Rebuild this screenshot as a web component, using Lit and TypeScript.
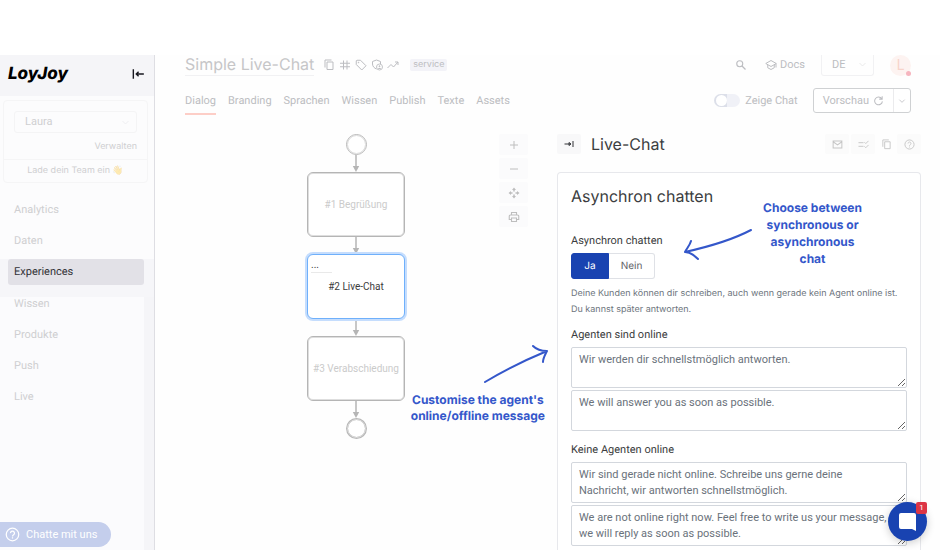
import { LitElement, html, css, svg } from "lit";
import { customElement, property, state } from "lit/decorators.js";
import { classMap } from "lit/directives/class-map.js";

const ICONS: Record<string, unknown> = {
  collapse: svg`<path d="M4 4v16M9 12h13M13 8l-4 4 4 4" stroke-width="2.4"/>`,
  expand: svg`<path d="M20 6v12M3 12h12M12 9l4 3-4 3z" stroke-width="2"/>`,
  copy: svg`<path d="M8 6h12v15H8zM4 17V2h13" stroke-width="2"/>`,
  hash: svg`<path d="M9 3v18M16 3v18M2 8.500h20M2 15.500h20" stroke-width="2"/>`,
  tag: svg`<path d="M2.500 3.500v7.500l11 11 8.500-8.500-11-11H4z" stroke-width="2"/><circle cx="7" cy="7" r="1" fill="currentColor"/>`,
  shield: svg`<path d="M11 20c-4-1.500-8-5-8-10V5l8-3 8 3v5" stroke-width="2"/><circle cx="17" cy="16" r="6" stroke-width="1.800"/><circle cx="17" cy="14.500" r="1.300" fill="currentColor"/><path d="M14.500 19h5" stroke-width="2"/>`,
  trend: svg`<path d="M1 18l7-7 5 5 9-10M16 6h6v6" stroke-width="2"/>`,
  search: svg`<circle cx="9.500" cy="9.500" r="6" stroke-width="2.200"/><path d="M14 14l7 7" stroke-width="2.600"/>`,
  cap: svg`<path d="M1.500 9L12 3l10.500 6L12 15zM5.500 12v5.500L12 21l6.500-3.500V12M22 9v8" stroke-width="2"/>`,
  reload: svg`<path d="M19 8a8.500 8.500 0 1 0 1.500 6M20 2.500V9h-6.500" stroke-width="2.200"/>`,
  down: svg`<path d="M4 8l8 8 8-8" stroke-width="2.400"/>`,
  plus: svg`<path d="M12 4v16M4 12h16" stroke-width="2"/>`,
  minus: svg`<path d="M4 12h16" stroke-width="2"/>`,
  move: svg`<path d="M12 1l4 5H8zM12 23l4-5H8zM1 12l5-4v8zM23 12l-5-4v8z" fill="currentColor" stroke="none"/><path d="M12 5v4M12 15v4M5 12h4M15 12h4" stroke-width="3"/>`,
  print: svg`<path d="M7 8V3h10v5M6 17H2.500v-6.500a2.500 2.500 0 0 1 2.500-2.500h14a2.500 2.500 0 0 1 2.500 2.500V17H18M7 14h10v7H7z" stroke-width="2.200"/>`,
  mail: svg`<path d="M2.500 4.500h19v15h-19zM2.500 6l9.500 7 9.500-7" stroke-width="2.200"/>`,
  rule: svg`<path d="M1 8h11M1 16h11M14 7l3 3 6-6M14 16l3 3 6-6" stroke-width="2"/>`,
  help: svg`<circle cx="12" cy="12" r="10" stroke-width="2"/><path d="M8.800 9.800a3.200 3.200 0 1 1 5 2.600c-1.200.8-1.800 1.300-1.800 2.600M12 16.500v2" stroke-width="2"/>`,
};

@customElement("ui-icon")
export class UiIcon extends LitElement {
  @property() name = "";
  static styles = css`
    :host { display: inline-flex; flex: none; width: 12px; height: 12px; }
    svg { width: 100%; height: 100%; fill: none; stroke: currentColor; }
  `;
  render() {
    return html`<svg viewBox="0 0 24 24" aria-hidden="true">${ICONS[this.name]}</svg>`;
  }
}

const NAV = ["Analytics", "Daten", "Experiences", "Wissen", "Produkte", "Push", "Live"];

@customElement("side-bar")
export class SideBar extends LitElement {
  static styles = css`
    :host { display: flex; flex-direction: column; flex: none; width: 155px; box-sizing: border-box;
      border-right: 1px solid #dedee3; background: #fcfcfd; color: #cfcfd1; }
    .top { display: flex; align-items: center; justify-content: space-between; height: 41px;
      padding: 0 9px 4px 8px; box-sizing: border-box; background: #f5f5f8; color: #000; }
    .logo { font: italic 800 17px/24px Inter, sans-serif; }
    button { font: inherit; color: inherit; border: 0; padding: 0; background: none; }
    .fold { display: flex; padding: 5px 0; color: #17171f; }
    .fold ui-icon { width: 14px; height: 14px; }
    .team { display: flex; flex-direction: column; margin: 4px 6px 0 3px; border: 1px solid #f5f5f6;
      border-radius: 4px; font: 9px/14px Inter, sans-serif; }
    .pick { position: relative; display: flex; margin: 10px 10px 0; }
    .pick select { appearance: none; flex: 1; min-width: 0; height: 22px; padding: 0 10px;
      border: 1px solid #f4f4f5; border-radius: 3px; background: none; font: 11px/16px Roboto, Inter, sans-serif; color: inherit; }
    .pick ui-icon { position: absolute; right: 7px; top: 7px; width: 9px; height: 9px; color: #ececee; }
    a { color: inherit; text-decoration: none; }
    .manage { align-self: flex-end; margin: 7px 10px 5px; }
    .invite { border-top: 1px solid #f5f5f6; padding: 4px 0; text-align: center; }
    .hand { opacity: 0.35; }
    nav { display: flex; flex-direction: column; flex: 1; margin-top: 14px; font-size: 11px; }
    nav a { display: flex; align-items: center; height: 26px; margin: 0 10px 5px 8px; padding: 0 6px; border-radius: 3px; }
    .band { background: #f6f6f9; height: 38px; }
    .band a { background: #e2e1e7; color: #333338; }
    .rest { flex: 1; background: #fbfbfd; border-right: 10px solid #f5f5f8; }
    .rest a { margin-right: 0; }
    .rest a:first-child { height: 14px; margin-bottom: 11px; }
  `;
  render() {
    return html`
      <div class="top">
        <span class="logo">LoyJoy</span>
        <button class="fold" aria-label="Menü einklappen"><ui-icon name="collapse"></ui-icon></button>
      </div>
      <div class="team">
        <div class="pick">
          <select aria-label="Team"><option>Laura</option></select>
          <ui-icon name="down"></ui-icon>
        </div>
        <a class="manage" href="#verwalten">Verwalten</a>
        <a class="invite" href="#einladen">Lade dein Team ein <span class="hand">👋</span></a>
      </div>
      <nav>
        ${NAV.slice(0, 2).map((n) => html`<a href="#${n}">${n}</a>`)}
        <div class="band"><a href="#Experiences" aria-current="page">${NAV[2]}</a></div>
        <div class="rest">${NAV.slice(3).map((n) => html`<a href="#${n}">${n}</a>`)}</div>
      </nav>`;
  }
}

@customElement("page-header")
export class PageHeader extends LitElement {
  static styles = css`
    :host { display: flex; flex-direction: column; padding: 0 20px 0 30px; color: #bcbdc1; }
    .row { display: flex; align-items: center; }
    .first { height: 20px; }
    h1 { margin: 0; padding-bottom: 2px; font: 400 16px/18px Inter, sans-serif; color: #c6c6c8; border-bottom: 1px solid #f1f1f3; }
    .tools { display: flex; gap: 4px; margin-left: 9px; }
    button, select { font: inherit; color: inherit; background: none; border: 0; padding: 0; }
    button { display: flex; align-items: center; }
    .chip { margin-left: 11px; padding: 0 3px; border-radius: 2px; background: #f3f3f8; font: 9px/12px Inter, sans-serif; }
    .right { display: flex; align-items: center; margin-left: auto; }
    .docs { display: flex; align-items: center; gap: 3px; margin: 0 16px 0 18px; color: inherit; text-decoration: none; font-size: 11px; }
    .lang { position: relative; display: flex; }
    .lang select { appearance: none; width: 53px; height: 21px; padding-left: 10px; font-size: 11px;
      border: 1px solid #f1f1f3; border-top: 0; border-radius: 0 0 3px 3px; }
    .lang ui-icon { position: absolute; right: 7px; top: 5px; width: 9px; height: 9px; color: #e6e6e8; }
    .me { position: relative; justify-content: center; width: 21px; height: 21px; margin: 0 9px 0 16px;
      border-radius: 50%; background: #fdf3f1; color: #f8d3ca; font-size: 14px; }
    .dot { position: absolute; right: 0; bottom: 0; width: 5px; height: 5px; border-radius: 50%; background: #f6b5bf; }
    .second { height: 27px; margin-top: 12px; font-size: 11px; }
    .tabs { display: flex; gap: 12px; align-self: stretch; }
    .tabs a { color: inherit; text-decoration: none; box-sizing: border-box; height: 28px; line-height: 28px; border-bottom: 2px solid transparent; }
    .tabs .on { border-bottom-color: #fdcec7; }
    .switch { display: flex; align-items: center; gap: 5px; margin-right: 15px; }
    .switch input { appearance: none; position: relative; width: 26px; height: 13px; margin: 0; border-radius: 7px;
      background: linear-gradient(90deg, #dcdfe9 50%, #f0f1f7 50%); }
    .switch input::before { content: ""; position: absolute; left: 2px; top: 1px; width: 11px; height: 11px; border-radius: 50%; background: #fff; }
    .split { display: flex; height: 25px; box-sizing: border-box; margin-right: 9px; border: 1px solid #cfd1d3; border-radius: 3px; background: #fff; }
    .split button { gap: 4px; padding: 0 9px; }
    .split .more { padding: 0 4px; border-left: 1px solid #ebebed; }
    .more ui-icon { width: 8px; height: 8px; }
    .reload { width: 11px; height: 11px; }
  `;
  render() {
    return html`
      <div class="row first">
        <h1>Simple Live-Chat</h1>
        <div class="tools">
          ${["copy", "hash", "tag", "shield", "trend"].map(
            (n) => html`<button aria-label=${n}><ui-icon name=${n}></ui-icon></button>`)}
        </div>
        <span class="chip">service</span>
        <div class="right">
          <button aria-label="Suche"><ui-icon name="search"></ui-icon></button>
          <a class="docs" href="#docs"><ui-icon name="cap"></ui-icon>Docs</a>
          <div class="lang"><select aria-label="Sprache"><option>DE</option></select><ui-icon name="down"></ui-icon></div>
          <button class="me" aria-label="Profil">L<span class="dot"></span></button>
        </div>
      </div>
      <div class="row second">
        <nav class="tabs">
          ${["Dialog", "Branding", "Sprachen", "Wissen", "Publish", "Texte", "Assets"].map(
            (t, i) => html`<a class=${classMap({ on: i === 0 })} href="#${t}">${t}</a>`)}
        </nav>
        <div class="right">
          <label class="switch"><input type="checkbox" role="switch" />Zeige Chat</label>
          <div class="split">
            <button>Vorschau <ui-icon class="reload" name="reload"></ui-icon></button>
            <button class="more" aria-label="Mehr"><ui-icon name="down"></ui-icon></button>
          </div>
        </div>
      </div>`;
  }
}

@customElement("flow-canvas")
export class FlowCanvas extends LitElement {
  static styles = css`
    :host { position: relative; display: block; flex: 1; padding-top: 4px; }
    .flow { display: flex; flex-direction: column; align-items: center; }
    .end { width: 21px; height: 21px; box-sizing: border-box; border: 1px solid #b8b8b8; border-radius: 50%; background: #fff; outline: 1px solid #dcdcdc; outline-offset: -2px; }
    .end.last { border-width: 2px; }
    .arrow { width: 8px; height: 17px; }
    .node { position: relative; display: flex; align-items: center; justify-content: center; width: 98px; height: 65px;
      box-sizing: border-box; padding: 0; border: 1px solid #b5b5b5; border-radius: 6px; background: #fff;
      box-shadow: inset 0 0 0 1px #dedede; font: 10px/14px Roboto, Inter, sans-serif; color: #cbcbcb; white-space: nowrap; }
    .node.on { border-color: #6fb0fb; box-shadow: 0 0 0 2px #c5ddfd; color: #3c3c3c; }
    .dots { position: absolute; left: 3px; top: 3px; width: 21px; text-align: left; border-bottom: 1px solid #e9e9e9; }
    .tools { position: absolute; top: 4px; right: 29px; display: flex; flex-direction: column; gap: 3px; }
    .tools button { display: flex; align-items: center; justify-content: center; width: 29px; height: 21px; padding: 0;
      border: 0; border-radius: 2px; background: #fbfbfc; color: #bebebe; }
    .note { position: absolute; right: 12px; top: 214px; display: flex; flex-direction: column; align-items: center; gap: 8px; }
    .note p { margin: 0; text-align: center; font: 700 12px/16px Inter, sans-serif; color: #3457ca; }
    .note svg { align-self: flex-end; width: 68px; height: 40px; overflow: visible; }
    .ink { fill: none; stroke: #3457ca; stroke-width: 2; stroke-linecap: round; stroke-linejoin: round; }
  `;
  private arrow = html`<svg class="arrow" viewBox="0 0 8 17" aria-hidden="true">
    <path d="M4 0V12" stroke="#b5b5b5" stroke-width="1.500" /><path d="M.800 11h6.400L4 17z" fill="#b5b5b5" /></svg>`;
  render() {
    return html`
      <div class="flow">
        <span class="end"></span>${this.arrow}
        <button class="node">#1 Begrüßung</button>${this.arrow}
        <button class="node on"><span class="dots">...</span>#2 Live-Chat</button>${this.arrow}
        <button class="node">#3 Verabschiedung</button>${this.arrow}
        <span class="end last"></span>
      </div>
      <div class="tools">
        ${["plus", "minus", "move", "print"].map(
          (n) => html`<button aria-label=${n}><ui-icon name=${n}></ui-icon></button>`)}
      </div>
      <div class="note">
        <svg viewBox="0 0 68 40" aria-hidden="true">
          <path class="ink" d="M8 38C26 27 46 17 70 7M56 2c4 4 9 5 14 5-2 4-4 7-4 11" />
        </svg>
        <p>Customise the agent's<br />online/offline message</p>
      </div>`;
  }
}

@customElement("chat-panel")
export class ChatPanel extends LitElement {
  @state() private mode = "Ja";
  static styles = css`
    :host { display: flex; flex-direction: column; flex: 0 0 364px; margin-right: 19px; color: #3b3d40; }
    header { display: flex; align-items: center; height: 28px; }
    header button { display: flex; align-items: center; justify-content: center; width: 24px; height: 20px; padding: 0;
      border: 0; border-radius: 2px; background: #fbfbfb; color: #c6c6c6; }
    header .fold { background: #f8f8f9; color: #303236; }
    h2, h3 { margin: 0; font: 400 16px/24px Inter, sans-serif; }
    h2 { margin-left: 10px; }
    .acts { display: flex; gap: 2px; margin-left: auto; }
    .acts .plain { background: none; width: 18px; }
    .acts ui-icon { width: 11px; height: 11px; }
    .card { position: relative; flex: 1; display: flex; flex-direction: column; margin-top: 14px; padding: 11px 13px 4px;
      border: 1px solid #e7e8ec; border-bottom: 0; border-radius: 4px 4px 0 0; background: #fff; font-size: 11px; line-height: 16px; }
    .seg { display: flex; align-self: flex-start; height: 26px; margin-top: 4px; }
    .seg label { position: relative; display: flex; align-items: center; justify-content: center; width: 36px;
      border: 1px solid #dfe1e6; border-radius: 0 3px 3px 0; color: #5f6267; font: 10px/16px Inter, sans-serif; }
    .seg label:last-child { width: 45px; border-left: 0; }
    .seg label:first-child { border-radius: 3px 0 0 3px; }
    .seg input { position: absolute; inset: 0; margin: 0; opacity: 0; }
    .seg label.on { background: #1943b1; border-color: #1943b1; color: #fff; }
    .cap { margin-top: 25px; }
    .hint { margin: 7px 0 0; font: 9px/16px Inter, sans-serif; color: #6d757d; }
    .lbl { margin: 9px 0 4px; }
    textarea { display: block; box-sizing: border-box; width: 100%; height: 41px; margin: 0 0 2px; padding: 4px 15px 3px 7px;
      border: 1px solid #d3d7dd; border-radius: 2px; background: #fff; color: #6a727b; font: 11px/16px Roboto, Inter, sans-serif; resize: vertical; overflow: hidden; }
    .note { position: absolute; top: 26px; right: 58px; margin: 0; text-align: center; font: 700 12px/17px Inter, sans-serif; color: #3457ca; }
    .pen { position: absolute; top: 54px; left: 124px; width: 72px; height: 36px; }
    .ink { fill: none; stroke: #3457ca; stroke-width: 2; stroke-linecap: round; stroke-linejoin: round; }
  `;
  render() {
    return html`
      <header>
        <button class="fold" aria-label="Panel einklappen"><ui-icon name="expand"></ui-icon></button>
        <h2>Live-Chat</h2>
        <div class="acts">
          ${["mail", "rule", "copy", "help"].map(
            (n) => html`<button class=${classMap({ plain: n === "copy" })} aria-label=${n}><ui-icon name=${n}></ui-icon></button>`)}
        </div>
      </header>
      <section class="card">
        <h3>Asynchron chatten</h3>
        <div class="cap" id="mode">Asynchron chatten</div>
        <div class="seg" role="radiogroup" aria-labelledby="mode">
          ${["Ja", "Nein"].map(
            (m) => html`<label class=${classMap({ on: this.mode === m })}>
              <input type="radio" name="mode" .checked=${this.mode === m} @change=${() => (this.mode = m)} />${m}</label>`)}
        </div>
        <p class="hint">Deine Kunden können dir schreiben, auch wenn gerade kein Agent online ist.<br />Du kannst später antworten.</p>
        <label class="lbl" for="on">Agenten sind online</label>
        <textarea id="on" .value=${"Wir werden dir schnellstmöglich antworten."}></textarea>
        <textarea aria-label="Agenten sind online, Englisch" .value=${"We will answer you as soon as possible."}></textarea>
        <label class="lbl" for="off">Keine Agenten online</label>
        <textarea id="off" .value=${"Wir sind gerade nicht online. Schreibe uns gerne deine Nachricht, wir antworten schnellstmöglich."}></textarea>
        <textarea aria-label="Keine Agenten online, Englisch" .value=${"We are not online right now. Feel free to write us your message, we will reply as soon as possible."}></textarea>
        <svg class="pen" viewBox="0 0 72 36" aria-hidden="true">
          <path class="ink" d="M69 3C50 13 30 19 3 25M9 14C8 18 5 21 3 25c5 0 9 3 13 7" />
        </svg>
        <p class="note">Choose between<br />synchronous or<br />asynchronous<br />chat</p>
      </section>`;
  }
}

@customElement("app-root")
export class AppRoot extends LitElement {
  static styles = css`
    :host { display: flex; min-height: 100vh; box-sizing: border-box; padding-top: 55px; background: #fff;
      font: 11px/16px Roboto, Inter, sans-serif; text-rendering: geometricPrecision; }
    main { display: flex; flex-direction: column; flex: 1; min-width: 0; background: #fefefe; }
    .work { display: flex; flex: 1; margin-top: 16px; }
    button { border: 0; padding: 0; font: inherit; color: #fff; }
    .ask { position: fixed; left: 0; bottom: 3px; display: flex; align-items: center; gap: 6px; height: 25px;
      padding: 0 14px 0 5px; border-radius: 0 13px 13px 0; background: #c4ceec; }
    .ask ui-icon { width: 15px; height: 15px; }
    .chat { position: fixed; right: 13px; bottom: 9px; width: 39px; height: 39px; border-radius: 50%; background: #1943b1;
      box-shadow: 0 2px 8px #00000033; }
    .chat svg { display: block; width: 39px; height: 39px; }
    .badge { position: absolute; right: 0; top: 0; width: 11px; height: 12px; border-radius: 2px; background: #dc3545; font-size: 8px; line-height: 12px; }
  `;
  render() {
    return html`
      <side-bar></side-bar>
      <main>
        <page-header></page-header>
        <div class="work"><flow-canvas></flow-canvas><chat-panel></chat-panel></div>
      </main>
      <button class="ask"><ui-icon name="help"></ui-icon>Chatte mit uns</button>
      <button class="chat" aria-label="Chat öffnen">
        <svg viewBox="0 0 39 39" aria-hidden="true"><path d="M13 11h13q2 0 2 2v16l-4-2H13q-2 0-2-2V13q0-2 2-2z" fill="#fff" /></svg>
        <span class="badge">1</span>
      </button>`;
  }
}
